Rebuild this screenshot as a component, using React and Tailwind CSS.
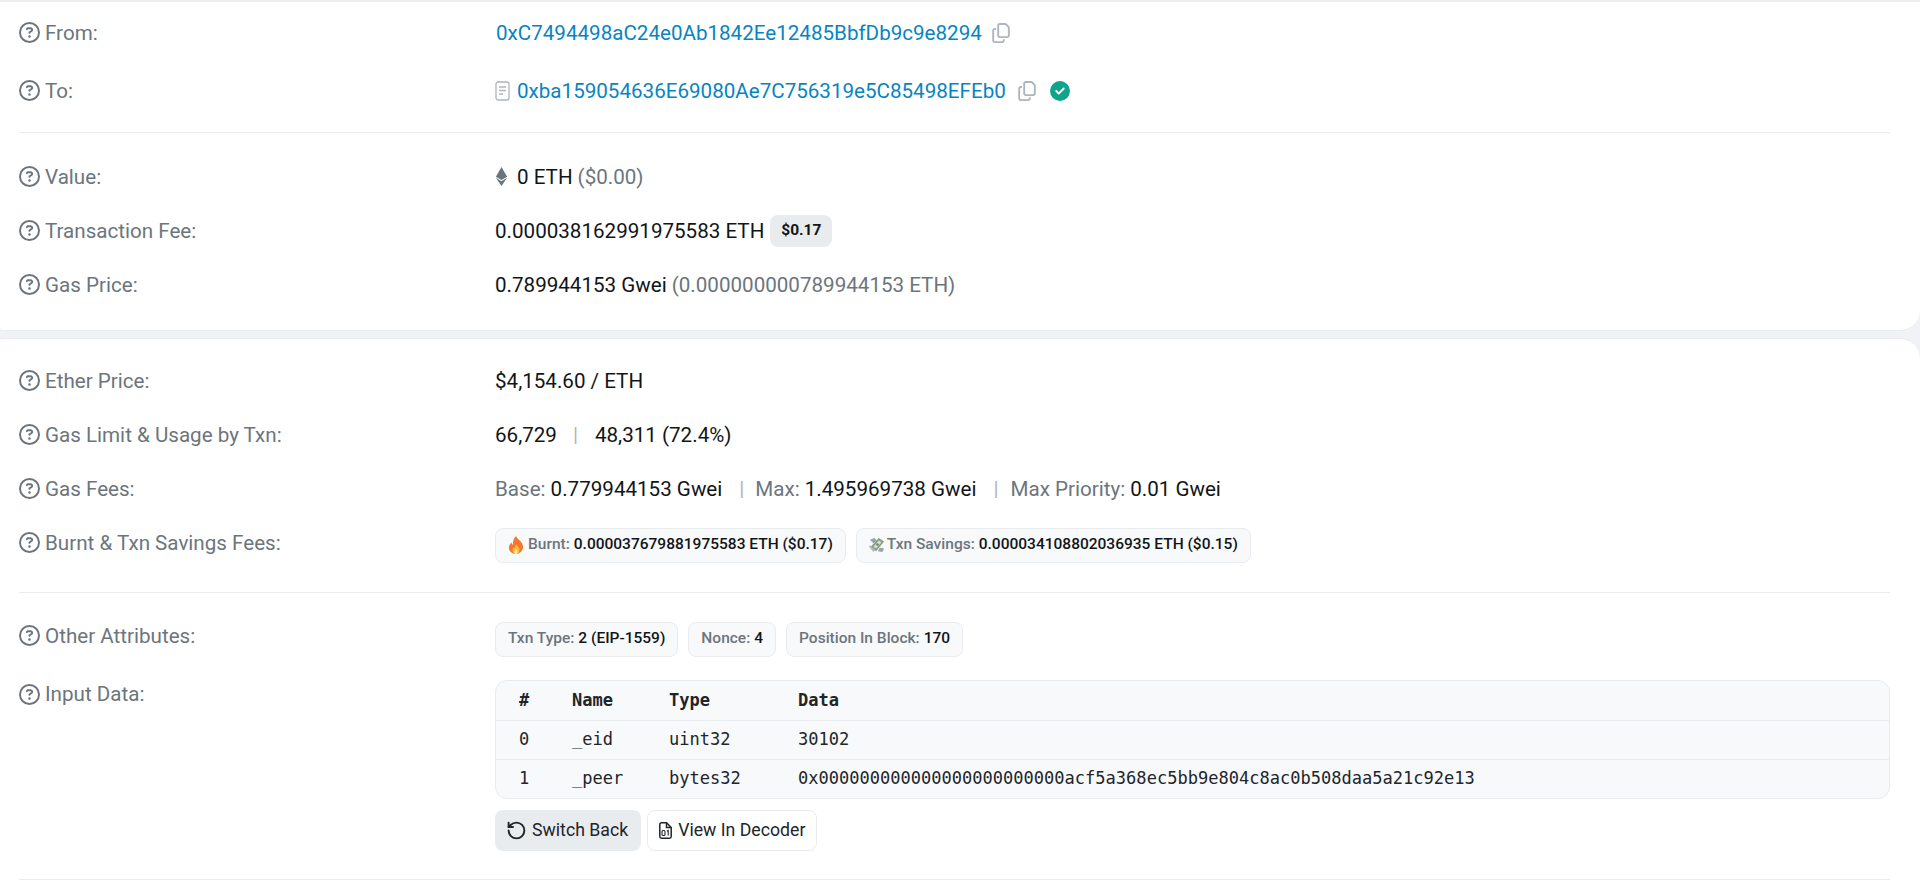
import { FaRegCircleQuestion, FaRegCopy, FaCircleCheck, FaEthereum } from "react-icons/fa6";
import { RotateCcw } from "lucide-react";

function Label({ children, className = "" }) {
  return (
    <div className={"w-[476px] shrink-0 flex items-center gap-[5px] text-[#6c757d] " + className}>
      <FaRegCircleQuestion size={21} className="shrink-0" />
      <span>{children}</span>
    </div>
  );
}

function Row({ label, labelClass, children }) {
  return (
    <div className="h-[54px] flex items-center">
      <Label className={labelClass}>{label}</Label>
      <div className="flex items-center">{children}</div>
    </div>
  );
}

function Pill({ children }) {
  return (
    <span className="h-[35px] flex items-center gap-[4px] px-[12px] rounded-lg border border-[#e9ecef] bg-[#f8f9fa] text-[15.500px] font-medium text-[#6c757d]">
      {children}
    </span>
  );
}

function Fire() {
  return (
    <svg width="16" height="18" viewBox="0 0 16 18">
      <path d="M8 0c1 3 6 5 7 10 .6 4-3 8-7 8s-7.600-3-7-7c.3-2 1.500-3.500 2.500-4.500.2 1.300.7 2 1.500 2.500C4.500 5 6 2 8 0z" fill="#f4772e" />
      <path d="M8 8c.5 2 3.500 3 3.500 6 0 2-1.600 4-3.500 4s-3.500-1.700-3.500-3.700c0-1.500 1-2.300 1.500-3 .3.600.6 1 1 1.200C7 11 7.500 9.500 8 8z" fill="#fbc02d" />
      <path d="M8 13c.4 1 1.500 1.500 1.500 3 0 1-.7 2-1.500 2s-1.500-.8-1.500-2c0-1.300 1.100-2 1.500-3z" fill="#fde9c0" />
    </svg>
  );
}

function Money() {
  return (
    <svg width="16" height="18" viewBox="0 0 18 18" className="-mr-[2px]">
      <path d="M1 3l5-2 3 3-4 3zM12 12l5 1-2 4-5-1z" fill="#9aa2a8" />
      <path d="M2 11L11 1l6 4-9 11z" fill="#8a9b85" />
      <path d="M5 11l6-7 3 2-6 7z" fill="#d9dfd3" />
      <circle cx="9.500" cy="8.500" r="1.500" fill="#77866f" />
      <path d="M1 9l6 6-2 2-5-6z" fill="#b4bbc0" />
    </svg>
  );
}

function Contract() {
  return (
    <svg width="15" height="20" viewBox="0 0 15 20" fill="none" stroke="#adb5bd" strokeWidth="1.300">
      <rect x="1" y="1" width="13" height="18" rx="2" />
      <path d="M4 6h7M4 9.500h7M4 13h4" />
    </svg>
  );
}

function FileBinary() {
  return (
    <svg width="13" height="17" viewBox="0 0 13 17" fill="none" stroke="#212529" strokeWidth="1.500">
      <path d="M2.500 .8h5l4.700 4.700v9a1.700 1.700 0 0 1-1.700 1.700h-8A1.700 1.700 0 0 1 .8 14.500V2.500A1.700 1.700 0 0 1 2.500 .8z" />
      <path d="M7.500 .8v4.700h4.700" />
      <rect x="3" y="8.500" width="3" height="5" rx="1" strokeWidth="1.100" />
      <path d="M8 9.300l1.200-.8v5" strokeWidth="1.100" />
    </svg>
  );
}

function Table() {
  const rows = [
    ["0", "_eid", "uint32", "30102"],
    ["1", "_peer", "bytes32", "0x000000000000000000000000acf5a368ec5bb9e804c8ac0b508daa5a21c92e13"],
  ];
  return (
    <div className="w-[1395px] rounded-xl border border-[#e9ecef] bg-[#f8f9fa] font-['DejaVu_Sans_Mono',monospace] text-[17.050px] text-[#212529]">
      <div className="h-[39px] grid grid-cols-[76px_97px_129px_1fr] items-center font-bold">
        <span className="pl-[23px]">#</span>
        <span>Name</span>
        <span>Type</span>
        <span>Data</span>
      </div>
      {rows.map((r) => (
        <div key={r[0]} className="h-[39px] grid grid-cols-[76px_97px_129px_1fr] items-center border-t border-[#e9ecef]">
          <span className="pl-[23px]">{r[0]}</span>
          <span>{r[1]}</span>
          <span>{r[2]}</span>
          <span>{r[3]}</span>
        </div>
      ))}
    </div>
  );
}

export default function App() {
  return (
    <div className="h-[890px] overflow-hidden bg-[#f1f2f6] font-['Roboto',sans-serif] text-[20.600px] text-[#111518]">
      <div className="-ml-[14px] h-[331px] bg-white border-b border-t-2 border-[#e9ecef] border-t-[#eeeeee] rounded-b-[20px] pl-[33px] pr-[30px]">
        <div className="pt-[4px]">
          <Row label="From:">
            <a className="ml-[1px] text-[#0784c3]">0xC7494498aC24e0Ab1842Ee12485BbfDb9c9e8294</a>
            <FaRegCopy size={20} className="ml-[9px] text-[#adb5bd]" />
          </Row>
          <div className="mt-[4px]">
            <Row label="To:">
              <Contract />
              <a className="ml-[7px] text-[#0784c3]">0xba159054636E69080Ae7C756319e5C85498EFEb0</a>
              <FaRegCopy size={20} className="ml-[11px] text-[#adb5bd]" />
              <FaCircleCheck size={20} className="ml-[13px] text-[#0fa58b]" />
            </Row>
          </div>
        </div>
        <hr className="mt-[14px] border-[#e9ecef]" />
        <div className="mt-[17px]">
          <Row label="Value:">
            <FaEthereum size={19} className="-ml-[3px] text-[#6c757d]" />
            <span className="ml-[6px]">0 ETH</span>
            <span className="ml-[5px] text-[#6c757d]">($0.00)</span>
          </Row>
          <Row label="Transaction Fee:">
            <span>0.000038162991975583 ETH</span>
            <span className="ml-[6px] h-[32px] flex items-center px-[11px] rounded-lg bg-[#e9ecef] text-[15.500px] font-bold">$0.17</span>
          </Row>
          <Row label="Gas Price:">
            <span>0.789944153 Gwei</span>
            <span className="ml-[5px] text-[#6c757d]">(0.000000000789944153 ETH)</span>
          </Row>
        </div>
      </div>
      <div className="-ml-[14px] mt-[7px] h-[552px] bg-white border-t border-[#e9ecef] rounded-t-[20px] pl-[33px] pr-[30px]">
        <div className="pt-[15px]">
          <Row label="Ether Price:">
            <span>$4,154.60 / ETH</span>
          </Row>
          <Row label="Gas Limit & Usage by Txn:">
            <span>66,729</span>
            <span className="ml-[16px] mr-[17px] text-[#adb5bd]">|</span>
            <span>48,311 (72.4%)</span>
          </Row>
          <Row label="Gas Fees:">
            <span className="text-[#6c757d]">Base:</span>
            <span className="ml-[5px]">0.779944153 Gwei</span>
            <span className="ml-[17px] mr-[11px] text-[#adb5bd]">|</span>
            <span className="text-[#6c757d]">Max:</span>
            <span className="ml-[5px]">1.495969738 Gwei</span>
            <span className="ml-[17px] mr-[12px] text-[#adb5bd]">|</span>
            <span className="text-[#6c757d]">Max Priority:</span>
            <span className="ml-[5px]">0.01 Gwei</span>
          </Row>
          <Row label="Burnt & Txn Savings Fees:">
            <div className="mt-[4px] flex gap-[10px]">
              <Pill>
                <Fire />
                Burnt:
                <span className="text-[#111518]">0.000037679881975583 ETH ($0.17)</span>
              </Pill>
              <Pill>
                <Money />
                Txn Savings:
                <span className="text-[#111518]">0.000034108802036935 ETH ($0.15)</span>
              </Pill>
            </div>
          </Row>
        </div>
        <hr className="mt-[22px] border-[#e9ecef]" />
        <div className="mt-[18px]">
          <Row label="Other Attributes:" labelClass="-mt-[4px]">
            <div className="mt-[2px] flex gap-[10px]">
              <Pill>
                Txn Type:
                <span className="text-[#111518]">2 (EIP-1559)</span>
              </Pill>
              <Pill>
                Nonce:
                <span className="text-[#111518]">4</span>
              </Pill>
              <Pill>
                Position In Block:
                <span className="text-[#111518]">170</span>
              </Pill>
            </div>
          </Row>
        </div>
        <div className="mt-[15px] flex items-start">
          <div className="h-[28px] flex items-center">
            <Label>Input Data:</Label>
          </div>
          <div>
            <Table />
            <div className="mt-[11px] flex gap-[6px] text-[17.700px] text-[#212529]">
              <button className="h-[41px] flex items-center gap-[5px] pl-[11px] pr-[13px] rounded-lg bg-[#e9ecef]">
                <RotateCcw size={21} strokeWidth={2.200} />
                Switch Back
              </button>
              <button className="h-[41px] flex items-center gap-[6px] px-[11px] rounded-lg bg-white border border-[#e9ecef]">
                <FileBinary />
                View In Decoder
              </button>
            </div>
          </div>
        </div>
        <hr className="mt-[28px] border-[#e9ecef]" />
      </div>
    </div>
  );
}
